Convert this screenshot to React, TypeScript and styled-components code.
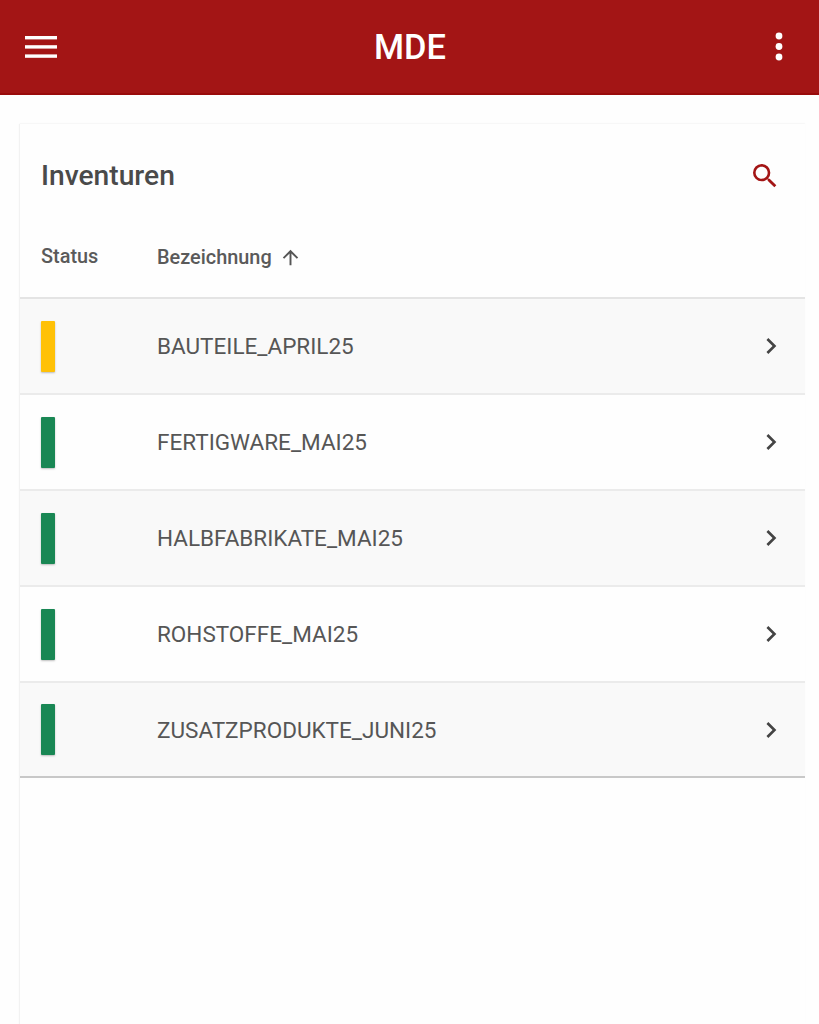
import React from "react";
import styled, { createGlobalStyle } from "styled-components";

const Global = createGlobalStyle`
  html, body { margin: 0; padding: 0; background: #fefefe; height: 100%; overflow: hidden; }
  body { font-family: Roboto, "Liberation Sans", sans-serif; }
`;
const Page = styled.div`
  width: 819px; height: 1024px; display: flex; flex-direction: column; overflow: hidden; background: #fefefe;
`;
const AppBar = styled.header`
  height: 93px; flex: none; background: #a31515; border-bottom: 2px solid #990b0b;
  display: flex; align-items: center; justify-content: space-between; padding: 0 24px 0 25px;
`;
const BarTitle = styled.h1`
  margin: 0; font-size: 34.4px; font-weight: 500; color: #fff;
`;
const IconBtn = styled.div`
  width: 32px; height: 32px; display: flex; align-items: center; justify-content: center; flex: none;
`;
const Content = styled.main`
  flex: 1; padding: 29px 14px 0 20px; display: flex; min-height: 0;
`;
const Card = styled.section`
  flex: 1; background: #fefefe; box-shadow: -1px 0 1px #f2f2f2, 0 -1px 1px #f8f8f8; display: flex; flex-direction: column;
`;
const CardHead = styled.div`
  height: 103px; flex: none; display: flex; align-items: center; justify-content: space-between;
  padding: 0 24px 0 21px; box-sizing: border-box;
`;
const CardTitle = styled.h2`
  margin: 0; font-size: 28.2px; font-weight: 500; color: #4a4a4a;
`;
const HeadRow = styled.div`
  height: 72px; flex: none; display: flex; align-items: flex-start; padding: 19px 0 0 21px; box-sizing: border-box;
  border-bottom: 2px solid #e4e4e4; font-size: 19.9px; font-weight: 500; color: #5a5a5a;
`;
const StatusCol = styled.div` width: 116px; flex: none; line-height: 22px; `;
const SortCol = styled.div` display: flex; align-items: center; gap: 7px; line-height: 22px; `;
const Row = styled.div<{ $shaded: boolean }>`
  height: 96px; box-sizing: border-box; display: flex; align-items: center; padding: 0 18px 0 21px;
  background: ${(p) => (p.$shaded ? "#f9f9f9" : "#fefefe")};
  border-bottom: 2px solid #ebebeb;
  &:last-child { border-bottom: 2px solid #c8c8c8; height: 95px; }
`;
const StatusBar = styled.div<{ $color: string }>`
  width: 14px; height: 51px; border-radius: 1px; background: ${(p) => p.$color}; box-shadow: 0 1px 2px rgba(0,0,0,.25);
`;
const StatusCell = styled.div` width: 116px; flex: none; `;
const Name = styled.div`
  flex: 1; font-size: 22.5px; color: #565656;
`;

const rows = [
  { name: "BAUTEILE_APRIL25", color: "#ffc107" },
  { name: "FERTIGWARE_MAI25", color: "#198754" },
  { name: "HALBFABRIKATE_MAI25", color: "#198754" },
  { name: "ROHSTOFFE_MAI25", color: "#198754" },
  { name: "ZUSATZPRODUKTE_JUNI25", color: "#198754" },
];

const Menu = () => (
  <svg width="32" height="32" viewBox="0 0 32 32" fill="#fff"><rect y="5" x="0" width="32" height="3.4" /><rect y="14.2" width="32" height="3.4" /><rect y="23.4" width="32" height="3.4" /></svg>
);
const Dots = () => (
  <svg width="32" height="32" viewBox="0 0 32 32" fill="#fff"><circle cx="16" cy="5" r="3.4" /><circle cx="16" cy="15.5" r="3.4" /><circle cx="16" cy="26" r="3.4" /></svg>
);
const Search = () => (
  <svg width="32" height="32" viewBox="0 0 24 24" fill="#a31515"><path d="M15.5 14h-.79l-.28-.27A6.471 6.471 0 0 0 16 9.5 6.5 6.5 0 1 0 9.5 16c1.61 0 3.09-.59 4.23-1.57l.27.28v.79l5 4.99L20.49 19l-4.99-5zm-6 0C7.01 14 5 11.99 5 9.5S7.01 5 9.5 5 14 7.01 14 9.5 11.99 14 9.5 14z" /></svg>
);
const Arrow = () => (
  <svg width="23" height="23" viewBox="0 0 24 24" fill="#555"><path d="M4 12l1.41 1.41L11 7.83V20h2V7.83l5.58 5.59L20 12l-8-8-8 8z" /></svg>
);
const Chevron = () => (
  <svg width="32" height="32" viewBox="0 0 24 24" fill="#444"><path d="M10 6L8.59 7.41 13.17 12l-4.58 4.59L10 18l6-6z" /></svg>
);

export default function App() {
  return (
    <Page>
      <Global />
      <AppBar>
        <IconBtn><Menu /></IconBtn>
        <BarTitle>MDE</BarTitle>
        <IconBtn><Dots /></IconBtn>
      </AppBar>
      <Content>
        <Card>
          <CardHead>
            <CardTitle>Inventuren</CardTitle>
            <Search />
          </CardHead>
          <HeadRow>
            <StatusCol>Status</StatusCol>
            <SortCol>Bezeichnung <Arrow /></SortCol>
          </HeadRow>
          {rows.map((r, i) => (
            <Row key={r.name} $shaded={i % 2 === 0}>
              <StatusCell><StatusBar $color={r.color} /></StatusCell>
              <Name>{r.name}</Name>
              <Chevron />
            </Row>
          ))}
        </Card>
      </Content>
    </Page>
  );
}
